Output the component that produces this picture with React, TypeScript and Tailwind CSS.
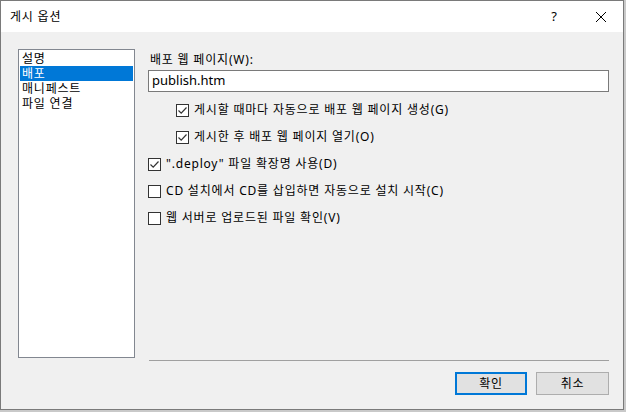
import React from 'react';

const font = { fontFamily: '"Noto Sans", "Noto Sans CJK KR", sans-serif' };

const CheckBox: React.FC<{ checked?: boolean; label: string }> = ({ checked, label }) => (
  <div className="flex items-center h-[20px]">
    <div className="w-[13px] h-[13px] border border-[#333333] bg-white flex items-center justify-center shrink-0">
      {checked && (
        <svg width="11" height="11" viewBox="0 0 11 11">
          <path d="M1.5 5.5 L4.2 8.2 L9.5 2.5" fill="none" stroke="#333333" strokeWidth="1.2" />
        </svg>
      )}
    </div>
    <span className="ml-[5px] text-[12px] tracking-[0.8px] text-black leading-none">{label}</span>
  </div>
);

export default function App() {
  const items = ['설명', '배포', '매니페스트', '파일 연결'];

  return (
    <div className="w-[626px] h-[412px] bg-[#c9c9c9]" style={font}>
      <div className="w-[624px] h-[410px] border border-[#7a7a7a] bg-[#f0f0f0] flex flex-col">
        {/* Title bar */}
        <div className="h-[31px] bg-white flex items-center shrink-0">
          <span className="ml-[9px] text-[12px] tracking-[0.8px] text-black">게시 옵션</span>
          <span className="ml-auto text-[13px] text-black mr-[38px]">?</span>
          <svg width="12" height="12" viewBox="0 0 12 12" className="mr-[16px]">
            <path d="M1 1 L11 11 M11 1 L1 11" stroke="#000" strokeWidth="1" />
          </svg>
        </div>

        {/* Body */}
        <div className="flex flex-1 pt-[17px] pl-[17px] pr-[14px]">
          {/* Left list */}
          <div className="w-[117px] h-[309px] border border-[#828790] bg-white pt-[1px] px-[1px] shrink-0">
            {items.map((it) => (
              <div
                key={it}
                className={
                  'h-[15px] pl-[2px] text-[12px] tracking-[0.8px] leading-[15px] overflow-hidden ' +
                  (it === '배포' ? 'bg-[#0078d7] text-white' : 'text-black')
                }
              >
                {it}
              </div>
            ))}
          </div>

          {/* Right panel */}
          <div className="flex-1 ml-[13px] flex flex-col">
            <div className="text-[12px] tracking-[0.8px] text-black leading-none mt-[5px] ml-[2px]">배포 웹 페이지(W):</div>
            <div className="mt-[4px] h-[22px] border border-[#7a7a7a] bg-white flex items-center pl-[3px] text-[13px] text-black">
              publish.htm
            </div>
            <div className="ml-[28px] mt-[8px] flex flex-col gap-[7px]">
              <CheckBox checked label="게시할 때마다 자동으로 배포 웹 페이지 생성(G)" />
              <CheckBox checked label="게시한 후 배포 웹 페이지 열기(O)" />
            </div>
            <div className="mt-[7px] flex flex-col gap-[7px]">
              <CheckBox checked label={'".deploy" 파일 확장명 사용(D)'} />
              <CheckBox label="CD 설치에서 CD를 삽입하면 자동으로 설치 시작(C)" />
              <CheckBox label="웹 서버로 업로드된 파일 확인(V)" />
            </div>
            <div className="flex-1" />
            <div className="h-px bg-[#a0a0a0] ml-[1px]" />
            <div className="flex justify-end gap-[9px] mt-[11px] mb-[14px]">
              <button className="w-[72px] h-[23px] border-2 border-[#0078d7] bg-[#e1e1e1] text-[12px] tracking-[0.8px] text-black">
                확인
              </button>
              <button className="w-[73px] h-[23px] border border-[#adadad] bg-[#e1e1e1] text-[12px] tracking-[0.8px] text-black">
                취소
              </button>
            </div>
          </div>
        </div>
      </div>
    </div>
  );
}
